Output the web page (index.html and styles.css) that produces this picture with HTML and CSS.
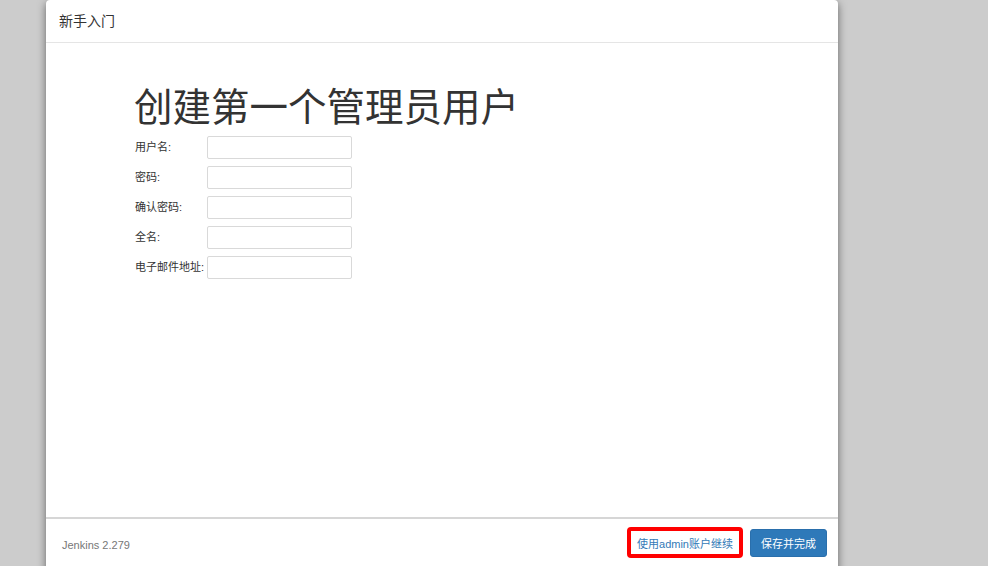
FILE: index.html
```html
<!DOCTYPE html>
<html lang="zh-CN">
<head>
<meta charset="utf-8">
<title>新手入门</title>
<link rel="stylesheet" href="styles.css">
</head>
<body>
<div class="dialog">
  <div class="dialog-header">新手入门</div>
  <div class="dialog-body">
    <h1 class="title">创建第一个管理员用户</h1>
    <form class="form">
      <div class="row"><label class="label">用户名:</label><input class="field" type="text"></div>
      <div class="row"><label class="label">密码:</label><input class="field" type="password"></div>
      <div class="row"><label class="label">确认密码:</label><input class="field" type="password"></div>
      <div class="row"><label class="label">全名:</label><input class="field" type="text"></div>
      <div class="row"><label class="label">电子邮件地址:</label><input class="field" type="text"></div>
    </form>
  </div>
  <div class="dialog-footer">
    <span class="version">Jenkins 2.279</span>
    <div class="actions">
      <span class="highlight"><button class="btn btn-link" type="button">使用admin账户继续</button></span>
      <button class="btn btn-primary" type="button">保存并完成</button>
    </div>
  </div>
</div>
</body>
</html>
```
FILE: styles.css
```css
html, body {
  margin: 0;
  padding: 0;
  height: 100%;
  overflow: hidden;
}
body {
  background: #cccccc;
  font-family: "Liberation Sans", "Noto Sans CJK SC", sans-serif;
  color: #333333;
}
.dialog {
  margin-left: 46px;
  width: 792px;
  height: 579px;
  background: #ffffff;
  border-radius: 4px 4px 0 0;
  box-shadow: 0 3px 9px rgba(0, 0, 0, 0.5);
  display: flex;
  flex-direction: column;
}
.dialog-header {
  height: 43px;
  box-sizing: border-box;
  border-bottom: 1px solid #e5e5e5;
  padding: 11px 0 0 13px;
  font-size: 14px;
  line-height: 20px;
  color: #333333;
}
.dialog-body {
  flex: 1;
  padding: 42px 0 0 88px;
}
.title {
  margin: 0;
  font-size: 38.5px;
  font-weight: 400;
  line-height: 46px;
  color: #333333;
}
.form {
  margin-top: 5px;
  display: flex;
  flex-direction: column;
  gap: 7px;
}
.row {
  display: flex;
  align-items: center;
  height: 23px;
}
.label {
  width: 72px;
  padding-left: 1px;
  margin-bottom: 3px;
  font-size: 11px;
  color: #333333;
  white-space: nowrap;
}
.field {
  width: 145px;
  height: 23px;
  box-sizing: border-box;
  margin: 0;
  border: 1px solid #d9d9d9;
  border-radius: 2px;
  background: #ffffff;
  padding: 2px 4px;
}
.dialog-footer {
  height: 62px;
  box-sizing: border-box;
  border-top: 2px solid #d6d6d6;
  display: flex;
  align-items: flex-start;
  justify-content: space-between;
  padding: 8px 11px 0 16px;
}
.version {
  margin-top: 12px;
  font-size: 11px;
  color: #777777;
}
.actions {
  display: flex;
  align-items: center;
  gap: 7px;
}
.highlight {
  display: flex;
  border: 4px solid #ff0000;
  border-radius: 4px;
}
.btn {
  font-family: "Liberation Sans", "Noto Sans CJK SC", sans-serif;
  font-size: 11px;
  border-radius: 3px;
  cursor: pointer;
  margin: 0;
}
.btn-link {
  height: 23px;
  padding: 0 6px;
  border: none;
  background: #ffffff;
  color: #337ab7;
}
.btn-primary {
  height: 28px;
  padding: 0 10px;
  border: 1px solid #2a6fac;
  background: #2e79b9;
  color: #ffffff;
}
```
